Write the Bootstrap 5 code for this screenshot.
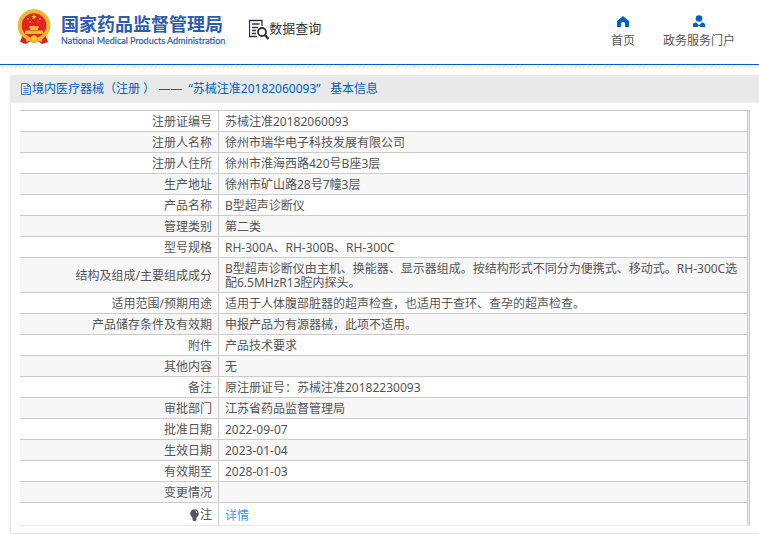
<!DOCTYPE html>
<html lang="zh-CN">
<head>
<meta charset="utf-8">
<meta name="viewport" content="width=device-width, initial-scale=1">
<title>国家药品监督管理局 数据查询</title>
<link href="https://cdn.jsdelivr.net/npm/bootstrap@5.3.0/dist/css/bootstrap.min.css" rel="stylesheet">
<style>
body{font-family:"Noto Sans","Noto Sans CJK SC",sans-serif;font-size:12px;line-height:14px;color:#555;background:#fff}
a{text-decoration:none}
.site-head{height:64px;padding:0 24px 0 17px}
.site-rule{height:4px;border-top:1px solid #0061c5;background:repeating-linear-gradient(135deg,#e4e4e4 0 1px,#fff 1px 3px)}
.brand{gap:10px;padding-top:8px;color:#2b5cad}
.brand-cn{font-family:"Noto Sans CJK SC",sans-serif;font-weight:700;font-size:18px;line-height:22px}
.brand-en{font-family:Lato,sans-serif;font-size:9px;line-height:13px;-webkit-text-stroke:.2px #2b5cad}
.query{font-family:"Noto Sans CJK SC",sans-serif;font-size:13px;line-height:20px;color:#333;margin-left:24px;padding-top:18px}
.top-nav{gap:28px;padding-top:15px}
.top-nav a{color:#555;line-height:18px}
.panel{margin:7px 0 0 10px;border:1px solid #e6e6e6;border-width:0 0 1px 1px;padding-bottom:7px}
.panel-title{background:#e9e9e9;color:#0061c5;font-size:12px;font-weight:400;line-height:27px;padding-left:10px;margin-left:-1px;border-bottom:1px solid #eceef8;white-space:pre}
.panel-title span{padding-top:1px;line-height:26px}
.panel-body{padding:7px 9px 0 9px}
.info{border-collapse:separate;border-spacing:0;border:1px solid #ccc;border-left:0;border-bottom-color:#e9e9f2;padding-right:1px;background:#eeeef8;border-right-color:#c8c8d0}
.info th,.info td{padding:4px 6px 2px;border-top:1px solid #ccc;background:#fff;font-weight:400;vertical-align:middle;height:21px}
.info th{width:198px;text-align:right}
.info td{border-left:1px solid #ccc;border-right:1px solid #c8c8d0}
.info tr:first-child>*{border-top:0;height:20px}
.info tr:nth-child(even)>*{background:#f7f7f7}
.info tr:last-child>*{height:23px}
.info tr:last-child>td{padding-top:6px}
.info a{color:#3399ff}
</style>
<script src="https://cdn.jsdelivr.net/npm/bootstrap@5.3.0/dist/js/bootstrap.bundle.min.js"></script>
</head>
<body>
<header class="site-head d-flex align-items-start">
  <div class="brand d-flex">
    <svg width="34" height="37" viewBox="0 0 34 37" aria-hidden="true">
      <path d="M6 26 3 34l6 2 4-3h8l4 3 6-2-3-8z" fill="#d91f1b"/>
      <circle cx="17" cy="17.500" r="14.300" fill="#e5211d" stroke="#efb52c" stroke-width="4"/>
      <path d="M4 27c3 5 8 6 13 6s10-1 13-6" fill="none" stroke="#f6d24c" stroke-width="2"/>
      <path d="m17 6 .7 2h2.100l-1.700 1.300.6 2-1.700-1.200-1.700 1.200.6-2L14.200 8h2.100z" fill="#f8d442"/>
      <path d="M10.500 10h1.500v1.500h-1.500zM22 10h1.500v1.500H22zM12.500 13H14v1.500h-1.500zM20 13h1.500v1.500H20zM13 18h8l1 2H12zM13 20h8v2h-8zM8 22.500h18V26H8z" fill="#f3bf35"/>
      <circle cx="17" cy="31" r="3.500" fill="#f2bd30" stroke="#d99a1e"/>
      <path d="M5 28v6h24v-6l-5 4v3l-3-2h-8l-3 2v-3z" fill="#df231b"/>
      <path d="M10 29v5M24 29v5M12 32q5 4 10 0" stroke="#efb52c" stroke-width="1.500" fill="none"/>
      <circle cx="17" cy="30.500" r="2.500" fill="#f5c838"/>
    </svg>
    <div>
      <div class="brand-cn mt-1">国家药品监督管理局</div>
      <div class="brand-en" lang="en">National Medical Products Administration</div>
    </div>
  </div>
  <div class="query d-flex">
    <svg width="20" height="22" viewBox="0 0 20 22" fill="none" stroke="#30303e" aria-hidden="true">
      <path d="M13 8V2.500H.5v16H8M3 6h7.500M3 9.500h6M3 12.500h4M3 15.500h4" stroke-width="1.300"/>
      <circle cx="13" cy="14" r="4" stroke-width="1.800"/><path d="m16 17 3.500 4" stroke-width="2.400"/>
    </svg>
    <span>数据查询</span>
  </div>
  <nav class="top-nav d-flex ms-auto text-center" aria-label="主导航">
    <a href="#" class="d-flex flex-column align-items-center"><svg width="12" height="13" viewBox="0 0 12 13" fill="#0061c5" aria-hidden="true"><path d="M6 1 0 6v6h4V9a2 2 0 0 1 4 0v3h4V6z"/></svg><span class="mt-1">首页</span></a>
    <a href="#" class="d-flex flex-column align-items-center"><svg width="12" height="13" viewBox="0 0 12 13" fill="#0061c5" aria-hidden="true"><circle cx="6" cy="3.500" r="3.300"/><path d="M0 12V9.500Q0 8 3 7.200l3 3 3-3q3 .8 3 2.300V12H7.500L6 10.500 4.500 12z"/></svg><span class="mt-1">政务服务门户</span></a>
  </nav>
</header>
<div class="site-rule"></div>
<main class="panel">
  <h1 class="panel-title mb-0 d-flex align-items-center"><svg width="12" height="12" viewBox="0 0 12 12" fill="none" stroke="#3c7cc8" aria-hidden="true"><path d="M1.500.5h6l3 3v8h-9zM7.500.5v3h3M3.500 3.500h2M3.500 5.500h5M3.500 7.500h5M3.500 9.500h5"/></svg><span>境内医疗器械（注册 ） ——  “苏械注准20182060093”   基本信息</span></h1>
  <div class="panel-body">
    <table class="info w-100">
      <tbody>
      <tr><th scope="row">注册证编号</th><td>苏械注准20182060093</td></tr>
      <tr><th scope="row">注册人名称</th><td>徐州市瑞华电子科技发展有限公司</td></tr>
      <tr><th scope="row">注册人住所</th><td>徐州市淮海西路420号B座3层</td></tr>
      <tr><th scope="row">生产地址</th><td>徐州市矿山路28号7幢3层</td></tr>
      <tr><th scope="row">产品名称</th><td>B型超声诊断仪</td></tr>
      <tr><th scope="row">管理类别</th><td>第二类</td></tr>
      <tr><th scope="row">型号规格</th><td>RH-300A、RH-300B、RH-300C</td></tr>
      <tr><th scope="row">结构及组成/主要组成成分</th><td>B型超声诊断仪由主机、换能器、显示器组成。按结构形式不同分为便携式、移动式。RH-300C选配6.5MHzR13腔内探头。</td></tr>
      <tr><th scope="row">适用范围/预期用途</th><td>适用于人体腹部脏器的超声检查，也适用于查环、查孕的超声检查。</td></tr>
      <tr><th scope="row">产品储存条件及有效期</th><td>申报产品为有源器械，此项不适用。</td></tr>
      <tr><th scope="row">附件</th><td>产品技术要求</td></tr>
      <tr><th scope="row">其他内容</th><td>无</td></tr>
      <tr><th scope="row">备注</th><td>原注册证号：苏械注准20182230093</td></tr>
      <tr><th scope="row">审批部门</th><td>江苏省药品监督管理局</td></tr>
      <tr><th scope="row">批准日期</th><td>2022-09-07</td></tr>
      <tr><th scope="row">生效日期</th><td>2023-01-04</td></tr>
      <tr><th scope="row">有效期至</th><td>2028-01-03</td></tr>
      <tr><th scope="row">变更情况</th><td></td></tr>
      <tr><th scope="row"><span class="d-flex justify-content-end align-items-center"><svg width="11" height="12" viewBox="0 0 11 12" aria-hidden="true"><circle cx="5.500" cy="4.500" r="4.300" fill="#555"/><path d="M3.500 8h4v3l-1 1h-2l-1-1z" fill="#555"/><path d="M6.500 2q1.500.5 1.500 2" stroke="#fff" fill="none"/></svg>注</span></th><td><a href="#">详情</a></td></tr>
      </tbody>
    </table>
  </div>
</main>
</body>
</html>
